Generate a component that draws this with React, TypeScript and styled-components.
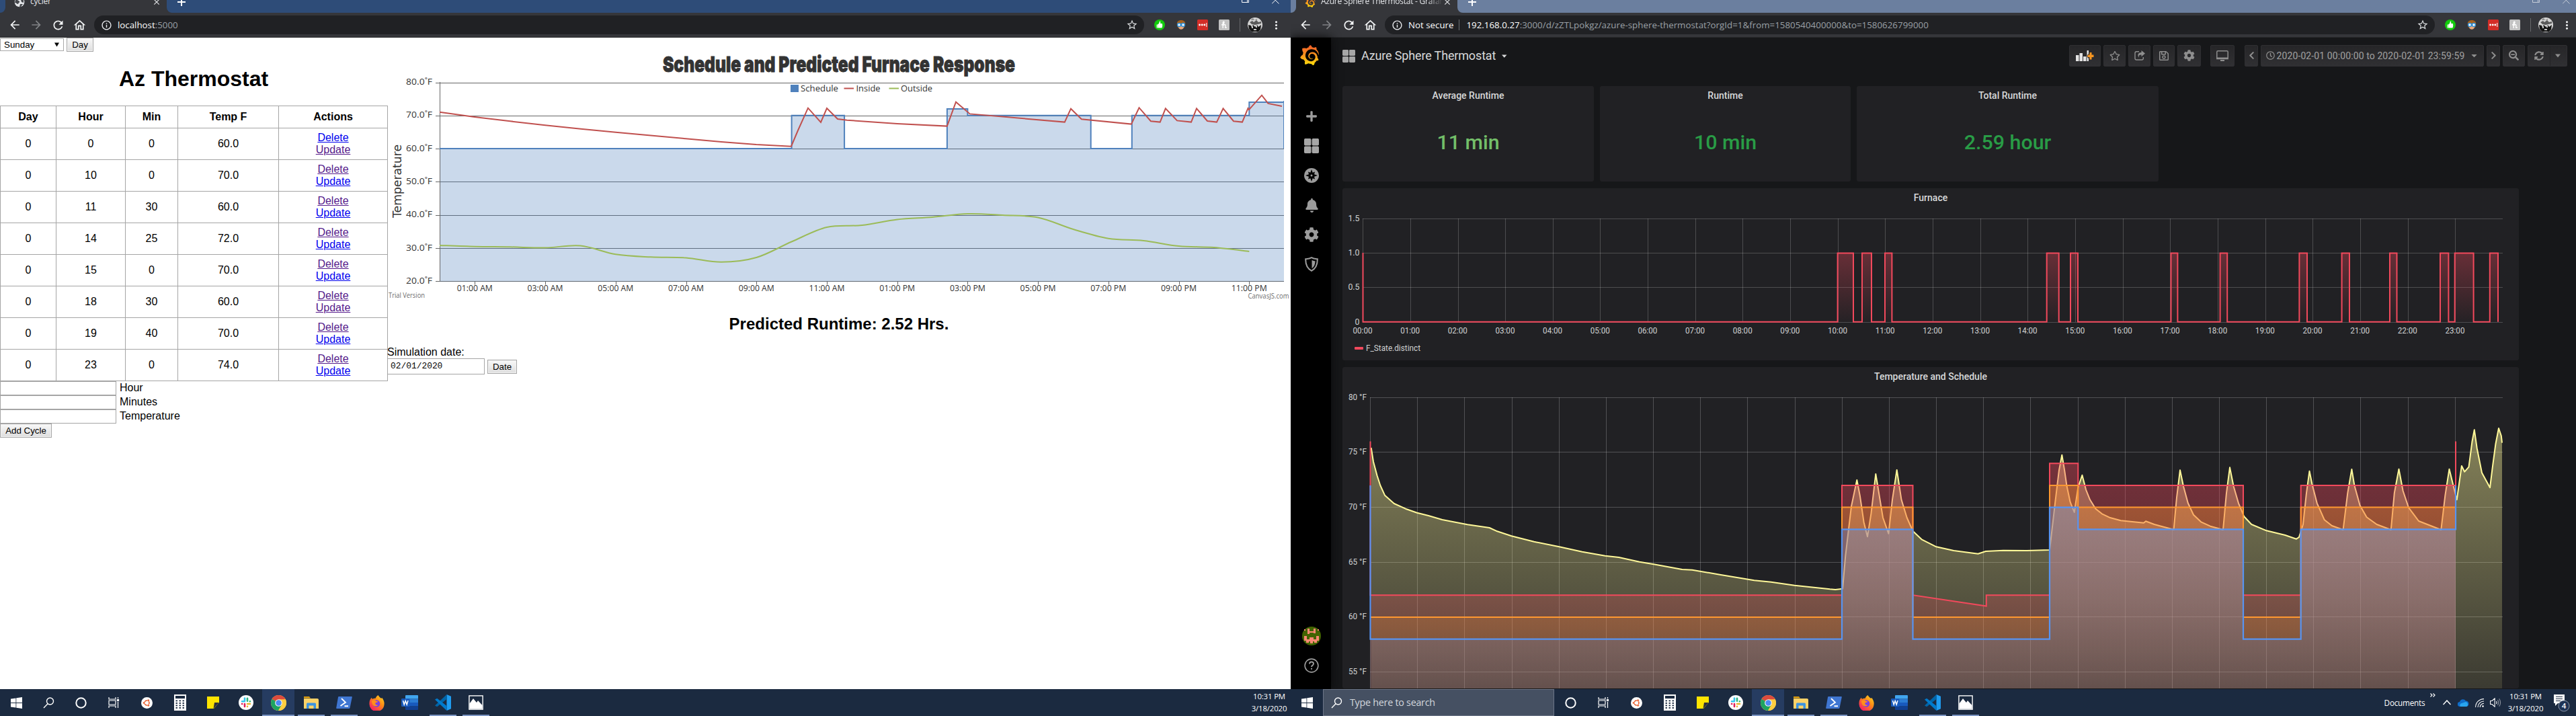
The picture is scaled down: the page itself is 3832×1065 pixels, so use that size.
import React from 'react';
import styled, { createGlobalStyle, css } from 'styled-components';
import {
  FaBell, FaCaretDown, FaChevronLeft, FaChevronRight, FaCog, FaPlus, FaRegClock, FaRegSave,
  FaRegStar, FaSearchMinus, FaSyncAlt,
} from 'react-icons/fa';
import {
  MdArrowBack, MdArrowForward, MdClose, MdInfoOutline, MdMoreVert, MdOutlineHome, MdRefresh, MdStarBorder,
} from 'react-icons/md';
import { SiGrafana } from 'react-icons/si';

const ui = `'Segoe UI', 'Open Sans', 'Noto Sans', sans-serif`;
const arial = `'Liberation Sans', Arial, sans-serif`;
const roboto = `Roboto, 'Noto Sans', sans-serif`;

const GlobalStyle = createGlobalStyle`
  html, body { margin: 0; padding: 0; background: #000; }
  body { width: 3832px; height: 1065px; overflow: hidden; }
  *, *::before, *::after { box-sizing: border-box; }
  svg { display: block; flex: none; }
`;

const Desktop = styled.div`
  display: flex;
  width: 3832px;
  height: 1065px;
  overflow: hidden;
`;

const Monitor = styled.section<{ $width: number }>`
  display: flex;
  flex-direction: column;
  width: ${(p) => p.$width}px;
  height: 1065px;
  overflow: hidden;
  flex: none;
`;

/* ---------- browser chrome ---------- */

const TabStrip = styled.div<{ $color: string }>`
  display: flex;
  width: 1920px;
  height: 19px;
  background: ${(p) => p.$color};
  overflow: hidden;
  flex: none;
`;

const TabEdge = styled.div<{ $side: 'left' | 'right'; $color: string }>`
  width: 8px;
  background: #35363a;
  flex: none;
  &::before {
    content: '';
    display: block;
    height: 19px;
    background: ${(p) => p.$color};
    border-radius: ${(p) => (p.$side === 'left' ? '0 0 8px 0' : '0 0 0 8px')};
  }
`;

const Tab = styled.div`
  display: flex;
  align-items: center;
  width: 240px;
  height: 19px;
  padding: 0 8px 0 13px;
  background: #35363a;
  color: #e3e5e8;
  font: 12px/18px ${ui};
  flex: none;
`;

const TabIcon = styled.div`
  display: flex;
  margin: -13px 8px 0 0;
`;

const TabTitle = styled.div<{ $fade?: boolean }>`
  flex: 1;
  margin-top: -15px;
  overflow: hidden;
  white-space: nowrap;
  letter-spacing: -0.25px;
  ${(p) => p.$fade && css`
    mask-image: linear-gradient(90deg, #000 88%, transparent);
  `}
`;

const TabClose = styled.div`
  margin-top: -13px;
`;

const NewTab = styled.div`
  margin: -6px 0 0 5px;
`;

const WindowButtons = styled.div`
  display: flex;
  gap: 34px;
  margin: -5px 17px 0 auto;
`;

const Toolbar = styled.div`
  display: flex;
  align-items: center;
  width: 1920px;
  height: 37px;
  padding-left: 6px;
  background: #35363a;
  border-bottom: 1px solid #28292b;
  flex: none;
`;

const NavButton = styled.div<{ $dim?: boolean }>`
  display: flex;
  justify-content: center;
  width: 32px;
  color: ${(p) => (p.$dim ? '#818386' : '#f1f3f4')};
`;

const Omnibox = styled.div`
  display: flex;
  align-items: center;
  width: 1562px;
  height: 28px;
  margin: 0 7px 0 6px;
  padding: 0 9px 0 10px;
  border-radius: 14px;
  background: #202124;
  color: #9aa0a6;
  font: 13.3px/28px ${ui};
  white-space: nowrap;
`;

const Host = styled.span`
  color: #fff;
`;

const UrlText = styled.div<{ $spacing: number }>`
  margin-left: 8px;
  letter-spacing: ${(p) => p.$spacing}px;
`;

const UrlDivider = styled.div`
  width: 1px;
  height: 16px;
  margin: 0 2px 0 8px;
  background: #6b6d70;
`;

const StarSlot = styled.div`
  margin-left: auto;
  color: #dcdee0;
`;

const Extension = styled.div<{ $width?: number }>`
  display: flex;
  justify-content: center;
  width: ${(p) => p.$width ?? 32}px;
  color: #f1f3f4;
`;

const Globe = () => (
  <svg width="16" height="16" viewBox="0 0 16 16">
    <circle cx="8" cy="8" r="7.3" fill="#e3e5e8" />
    <path d="M2 5c3-1 4 1 6 2 1 2-2 2-2 4-2 0-3-2-5-2zM9 1l2 3 3 1v4l-3-1-1-3-2-1zM9 11h4l-3 4H8z" fill="#45474b" />
  </svg>
);

const GrafanaLogo = ({ size }: { size: number }) => (
  <>
    <svg width="0" height="0">
      <defs>
        <linearGradient id="flame" x1="0" x2="0" y1="1" y2="0">
          <stop offset="0" stopColor="#fcde0b" />
          <stop offset="0.45" stopColor="#f99b1c" />
          <stop offset="1" stopColor="#f05a28" />
        </linearGradient>
      </defs>
    </svg>
    <SiGrafana size={size} fill="url(#flame)" />
  </>
);

const Extensions = () => (
  <>
    <Extension>
      <svg width="16" height="16" viewBox="0 0 16 16">
        <circle cx="8" cy="8" r="8" fill="#12ca0c" />
        <path d="M8 2.500c1.300 0 1.300 1 1.200 3.500h2.300c1 0 1 5.500-.2 6.500H5.200V7.200L7 6z" fill="#fff" />
        <rect x="3.600" y="7.500" width="1.200" height="5" fill="#fff" />
      </svg>
    </Extension>
    <Extension>
      <svg width="16" height="16" viewBox="0 0 16 16">
        <path d="M2 8C1 3 4 1 8 1s7 2 6 7l-1 4H3z" fill="#a5611f" />
        <path d="M4 6h8v5c0 5-8 5-8 0z" fill="#e8a678" />
        <circle cx="5" cy="8" r="2.400" fill="#fff" stroke="#2f8fd6" strokeWidth="1.500" />
        <circle cx="11" cy="8" r="2.400" fill="#fff" stroke="#2f8fd6" strokeWidth="1.500" />
      </svg>
    </Extension>
    <Extension>
      <svg width="16" height="16" viewBox="0 0 16 16">
        <rect width="16" height="16" rx="1.500" fill="#d32d27" />
        <circle cx="3.600" cy="8" r="1.400" fill="#fff" />
        <circle cx="7.200" cy="8" r="1.400" fill="#fff" />
        <circle cx="10.800" cy="8" r="1.400" fill="#fff" />
        <rect x="13.300" y="5" width="1" height="6" fill="#fff" />
      </svg>
    </Extension>
    <Extension>
      <svg width="16" height="16" viewBox="0 0 16 16">
        <rect width="16" height="16" rx="1.500" fill="#c3c3c3" />
        <path d="M4 8c2.500 0 4-2 4-4 0-1.500-1.800-1-1.800 1v8M6.300 9c3.500-3 4.200-1 3.400 1.500-.5 2 .7 2.500 2 1" fill="none" stroke="#fff" strokeWidth="1.400" />
      </svg>
    </Extension>
    <Extension $width={15}>
      <svg width="1" height="20"><rect width="1" height="20" fill="#68696c" /></svg>
    </Extension>
    <Extension $width={29}>
      <svg width="22" height="22" viewBox="0 0 22 22">
        <clipPath id="face"><circle cx="11" cy="11" r="11" /></clipPath>
        <g clipPath="url(#face)">
          <rect width="22" height="22" fill="#d4d4d4" />
          <path d="M3 7l4-2 2 2 4-3 3 3 4-1v3l-5 1-4 1-5-1z" fill="#5a5a5a" />
          <path d="M1 11l4 1 1 3 2-4 3 3 3-3 2 3 4-3-1 7-3 3H5l-3-4z" fill="#151515" />
          <path d="M6 13h2v3H6zM12 12h2v3h-2zM9 17h4v2H9z" fill="#c9c9c9" />
          <path d="M5 3l3-2 2 3 4-2v2H5z" fill="#8c8c8c" />
        </g>
      </svg>
    </Extension>
    <Extension $width={35}><MdMoreVert size={19} /></Extension>
  </>
);

type BrowserProps = {
  stripColor: string;
  favicon: React.ReactNode;
  title: string;
  fade?: boolean;
  dimButtons?: boolean;
  address: React.ReactNode;
};

const BrowserChrome = ({ stripColor, favicon, title, fade, dimButtons, address }: BrowserProps) => (
  <>
    <TabStrip $color={stripColor}>
      <TabEdge $side="left" $color={stripColor} />
      <Tab>
        <TabIcon>{favicon}</TabIcon>
        <TabTitle $fade={fade}>{title}</TabTitle>
        <TabClose><MdClose size={14} /></TabClose>
      </Tab>
      <TabEdge $side="right" $color={stripColor} />
      <NewTab>
        <svg width="16" height="16" viewBox="0 0 16 16"><path d="M9 3v12M3 9h12" stroke="#fff" strokeWidth="2" /></svg>
      </NewTab>
      <WindowButtons>
        <svg width="11" height="12" viewBox="0 0 11 12" fill="none" stroke={dimButtons ? '#c5ccd8' : '#fff'}>
          <path d="M2.500 2.500V.5h8v8h-2M.5 2.500h8v6h-8z" />
        </svg>
        <svg width="11" height="12" viewBox="0 0 11 12" fill="none" stroke={dimButtons ? '#c5ccd8' : '#fff'}>
          <path d="M0 0l10.500 10.500M10.500 0L0 10.500" />
        </svg>
      </WindowButtons>
    </TabStrip>
    <Toolbar>
      <NavButton><MdArrowBack size={20} /></NavButton>
      <NavButton $dim><MdArrowForward size={20} /></NavButton>
      <NavButton><MdRefresh size={21} /></NavButton>
      <NavButton><MdOutlineHome size={21} /></NavButton>
      <Omnibox>
        <MdInfoOutline size={17} color="#e8eaed" />
        {address}
        <StarSlot><MdStarBorder size={18} /></StarSlot>
      </Omnibox>
      <Extensions />
    </Toolbar>
  </>
);

/* ---------- scheduler page ---------- */

const SchedulerPage = styled.main`
  display: flex;
  flex: 1;
  background: #fff;
  color: #000;
  font: 16px/18px ${arial};
`;

const CycleColumn = styled.div`
  width: 576px;
  flex: none;
`;

const DayPicker = styled.form`
  display: flex;
  align-items: center;
  gap: 4px;
  height: 21px;
`;

const SelectBox = styled.div`
  display: flex;
  align-items: center;
  justify-content: space-between;
  width: 95px;
  height: 19px;
  padding: 0 6px 0 5px;
  border: 1px solid #a9a9a9;
  font-size: 13.33px;
`;

const PushButton = styled.button<{ $width: number }>`
  width: ${(p) => p.$width}px;
  height: 21px;
  padding: 0;
  border: 1px solid #a6a6a6;
  border-radius: 0;
  background: linear-gradient(#f8f8f8, #dedede);
  box-shadow: inset 0 0 0 1px #f2f2f2;
  color: #000;
  font: 13.33px/15px ${arial};
`;

const PageHeading = styled.h1`
  margin: 21px 0 21px;
  font-size: 32px;
  line-height: 38px;
  text-align: center;
`;

const CycleTable = styled.table`
  width: 576px;
  table-layout: fixed;
  border-collapse: collapse;
  text-align: center;
`;

const HeadCell = styled.th<{ $width: number }>`
  width: ${(p) => p.$width}px;
  height: 33px;
  padding: 0;
  border: 1px solid #a5a5a5;
`;

const Cell = styled.td`
  height: 47px;
  padding: 0;
  border: 1px solid #a5a5a5;
`;

const Action = styled.a<{ $visited?: boolean }>`
  display: block;
  color: ${(p) => (p.$visited ? '#551a8b' : '#0000ee')};
  text-decoration: underline;
`;

const FieldRow = styled.label`
  display: flex;
  align-items: center;
  gap: 5px;
  height: 21px;
`;

const FieldName = styled.span`
  padding-bottom: 2px;
`;

const TextField = styled.div<{ $width: number; $height: number }>`
  width: ${(p) => p.$width}px;
  height: ${(p) => p.$height}px;
  padding: 0 4px;
  border: 1px solid #a5a5a5;
  background: #fff;
  font: 12.9px/22px 'Liberation Mono', monospace;
`;

const ForecastColumn = styled.div`
  width: 1344px;
`;

const Forecast = styled.h2`
  margin: 13px 0 19px;
  font-size: 24px;
  line-height: 28px;
  text-align: center;
`;

const DateRow = styled.div`
  display: flex;
  align-items: center;
  gap: 4px;
  height: 24px;
`;

const DateLabel = styled.div`
  height: 18px;
`;

type Cycle = { hour: number; min: number; temp: string; deleteVisited: boolean; updateVisited: boolean };

const cycles: Cycle[] = [
  { hour: 0, min: 0, temp: '60.0', deleteVisited: false, updateVisited: true },
  { hour: 10, min: 0, temp: '70.0', deleteVisited: true, updateVisited: false },
  { hour: 11, min: 30, temp: '60.0', deleteVisited: true, updateVisited: false },
  { hour: 14, min: 25, temp: '72.0', deleteVisited: true, updateVisited: false },
  { hour: 15, min: 0, temp: '70.0', deleteVisited: true, updateVisited: false },
  { hour: 18, min: 30, temp: '60.0', deleteVisited: true, updateVisited: true },
  { hour: 19, min: 40, temp: '70.0', deleteVisited: true, updateVisited: false },
  { hour: 23, min: 0, temp: '74.0', deleteVisited: true, updateVisited: false },
];

type Point = [number, number];

const polyline = (pts: Point[]) => pts.map(([x, y], i) => `${i ? 'L' : 'M'}${x.toFixed(1)} ${y.toFixed(1)}`).join('');

/* Catmull-Rom spline through the points. */
const spline = (pts: Point[]) =>
  pts.reduce((d, p, i) => {
    if (i === 0) return `M${p[0]} ${p[1]}`;
    const a = pts[Math.max(0, i - 2)];
    const b = pts[i - 1];
    const c = pts[Math.min(pts.length - 1, i + 1)];
    return `${d}C${b[0] + (p[0] - a[0]) / 6} ${b[1] + (p[1] - a[1]) / 6} ${p[0] - (c[0] - b[0]) / 6} ${p[1] - (c[1] - b[1]) / 6} ${p[0]} ${p[1]}`;
  }, '');

const scheduleX = (h: number) => Math.min(1910, 654 + h * 52.36);
const scheduleY = (t: number) => 122.5 + (80 - t) * 4.93;

const scheduleSteps: [number, number][] = [
  [0, 60], [10, 70], [11.5, 60], [14.417, 72], [15, 70], [18.5, 60], [19.667, 70], [23, 74], [24, 74],
];

const stepPoints = (steps: [number, number][], x: (h: number) => number, y: (t: number) => number): Point[] => {
  const out: Point[] = [];
  steps.forEach(([h, t], i) => {
    if (i) out.push([x(h), y(steps[i - 1][1])]);
    out.push([x(h), y(t)]);
  });
  return out;
};

const insideLine: Point[] = [
  [654, 166.7], [706, 174], [759, 180.3], [811, 186.3], [864, 191.7], [916, 196.7], [968, 201.5], [1020, 206.3],
  [1073, 211], [1125, 215], [1177, 217.7], [1187, 194], [1202, 160.7], [1221, 182], [1230, 161], [1246, 177],
  [1260, 178.7], [1334.6, 183.9], [1408.8, 187.6], [1422, 151.7], [1442.7, 169.4], [1583.8, 181.6], [1593, 161.7],
  [1608.8, 177.2], [1682.9, 184.6], [1694.5, 160.2], [1711.9, 180.2], [1725.7, 181.6], [1733.8, 161.3], [1751, 179.4],
  [1772, 181.6], [1780, 161.3], [1796, 180], [1810, 181.6], [1819.5, 161.3], [1835, 180.2], [1848, 181.6],
  [1856.5, 161], [1858, 163.2], [1877, 141.7], [1886.4, 153.9], [1907, 158],
];

const outsideY = [
  365, 366.7, 367.3, 368.5, 365.6, 378.3, 382.3, 383.5, 389.8, 383, 359.5, 338, 335, 326.5, 323, 318, 320, 323.5, 341,
  354.7, 358, 366, 368, 374,
];

const calibri = `'Open Sans', 'Noto Sans', sans-serif`;

const ResponseChart = () => {
  const schedule = stepPoints(scheduleSteps, scheduleX, scheduleY);
  return (
    <svg width="1344" height="399" viewBox="576 56 1344 399" fontFamily={calibri} fill="#333">
      <text x="986" y="106.500" fontFamily="Impact, Inter, sans-serif" fontWeight="900" fontSize="32" textLength="524"
        lengthAdjust="spacingAndGlyphs" stroke="#333" strokeWidth="0.900">
        Schedule and Predicted Furnace Response
      </text>
      <text transform="translate(597 324) rotate(-90)" fontFamily="'DejaVu Sans', sans-serif" fontSize="17.500"
        textLength="109" lengthAdjust="spacingAndGlyphs">
        Temperature
      </text>
      {[80, 70, 60, 50, 40, 30, 20].map((t) => (
        <g key={t}>
          <path d={`M648 ${Math.round(scheduleY(t)) + 0.5}H1910`} stroke="#666" />
          <text x="604" y={scheduleY(t) + 3.500} fontSize="12.200" textLength="39" lengthAdjust="spacingAndGlyphs">
            {`${t}.0˚F`}
          </text>
        </g>
      ))}
      <path d={`${polyline(schedule)}V418.500H654Z`} fill="#4f81bc" fillOpacity="0.300" />
      <path d="M654.500 122V418" stroke="#666" />
      <path d={polyline(schedule)} fill="none" stroke="#4f81bc" strokeWidth="2" />
      <path d="M1909.500 150V221" stroke="#4f81bc" />
      <path d={polyline(insideLine)} fill="none" stroke="#c0504e" strokeWidth="2" />
      <path d={spline(outsideY.map((y, h) => [654 + h * 52.36, y] as Point))} fill="none" stroke="#9bbb58" strokeWidth="2" />
      {Array.from({ length: 12 }, (_, i) => i * 2 + 1).map((h) => {
        const x = 654 + h * 52.36;
        const label = `${String(h % 12 || 12).padStart(2, '0')}:00 ${h < 12 ? 'AM' : 'PM'}`;
        return (
          <g key={h}>
            <path d={`M${Math.round(x) + 0.5} 419v4.500`} stroke="#666" />
            <text x={x - 26.500} y="433" fontSize="12.200" textLength="53" lengthAdjust="spacingAndGlyphs">{label}</text>
          </g>
        );
      })}
      <rect x="1176" y="126" width="12" height="11" fill="#4f81bc" />
      <path d="M1255.500 131.500h14.500" stroke="#c0504e" strokeWidth="2" />
      <path d="M1322.500 131.500h14.500" stroke="#9bbb58" strokeWidth="2" />
      <g fontSize="12.500">
        <text x="1191" y="136" textLength="56" lengthAdjust="spacingAndGlyphs">Schedule</text>
        <text x="1273.500" y="136" textLength="36" lengthAdjust="spacingAndGlyphs">Inside</text>
        <text x="1340" y="136" textLength="47" lengthAdjust="spacingAndGlyphs">Outside</text>
      </g>
      <g fontSize="10.500" fill="#6c6c6c">
        <text x="578" y="442.500" textLength="54" lengthAdjust="spacingAndGlyphs">Trial Version</text>
        <text x="1856.500" y="443.500" textLength="61" lengthAdjust="spacingAndGlyphs">CanvasJS.com</text>
      </g>
    </svg>
  );
};

const Scheduler = () => (
  <SchedulerPage>
    <CycleColumn>
      <DayPicker>
        <SelectBox>
          Sunday
          <svg width="7" height="7" viewBox="0 0 7 7"><path d="M0 .5h7L3.500 6.500z" /></svg>
        </SelectBox>
        <PushButton $width={40} type="button">Day</PushButton>
      </DayPicker>
      <PageHeading>Az Thermostat</PageHeading>
      <CycleTable>
        <thead>
          <tr>
            <HeadCell $width={83}>Day</HeadCell>
            <HeadCell $width={103}>Hour</HeadCell>
            <HeadCell $width={78}>Min</HeadCell>
            <HeadCell $width={150}>Temp F</HeadCell>
            <HeadCell $width={162}>Actions</HeadCell>
          </tr>
        </thead>
        <tbody>
          {cycles.map((c) => (
            <tr key={c.hour}>
              <Cell>0</Cell>
              <Cell>{c.hour}</Cell>
              <Cell>{c.min}</Cell>
              <Cell>{c.temp}</Cell>
              <Cell>
                <Action $visited={c.deleteVisited}>Delete</Action>
                <Action $visited={c.updateVisited}>Update</Action>
              </Cell>
            </tr>
          ))}
        </tbody>
      </CycleTable>
      {['Hour', 'Minutes', 'Temperature'].map((label) => (
        <FieldRow key={label}>
          <TextField $width={173} $height={21} />
          <FieldName>{label}</FieldName>
        </FieldRow>
      ))}
      <PushButton $width={77} type="button">Add Cycle</PushButton>
    </CycleColumn>
    <ForecastColumn>
      <ResponseChart />
      <Forecast>Predicted Runtime: 2.52 Hrs.</Forecast>
      <DateLabel>Simulation date:</DateLabel>
      <DateRow>
        <TextField $width={145} $height={24}>02/01/2020</TextField>
        <PushButton $width={44} type="button">Date</PushButton>
      </DateRow>
    </ForecastColumn>
  </SchedulerPage>
);

/* ---------- dashboard page ---------- */

const DashboardPage = styled.main`
  display: flex;
  flex: 1;
  min-height: 0;
  background: #161719;
  color: #d8d9da;
  font: 14px/20px ${roboto};
`;

const SideBar = styled.nav`
  display: flex;
  flex-direction: column;
  width: 60px;
  padding-bottom: 13px;
  background: #000;
  box-shadow: 0 0 14px #0a0a0b;
  color: #9c9c9c;
  flex: none;
`;

const SideLogo = styled.div`
  height: 95px;
  padding: 11px 0 0 13px;
`;

const SideItem = styled.div<{ $push?: boolean }>`
  display: flex;
  align-items: center;
  justify-content: center;
  height: 44px;
  padding-left: 2px;
  ${(p) => p.$push && css`margin-top: auto;`}
`;

const Board = styled.div`
  display: flex;
  flex-direction: column;
  flex: 1;
  min-width: 0;
  padding-left: 17px;
`;

const BoardHeader = styled.header`
  display: flex;
  align-items: center;
  height: 72px;
  padding-bottom: 18px;
`;

const BoardTitle = styled.div`
  display: flex;
  align-items: center;
  gap: 9px;
  width: 1081px;
  font-size: 18px;
  letter-spacing: -0.15px;
`;

const ToolGroup = styled.div<{ $left: number }>`
  display: flex;
  gap: 4px;
  margin: -1px 0 0 ${(p) => p.$left}px;
`;

const ToolButton = styled.div<{ $width: number }>`
  display: flex;
  align-items: center;
  justify-content: center;
  gap: 3px;
  width: ${(p) => p.$width}px;
  height: 32px;
  border: 1px solid #2f2f32;
  border-radius: 2px;
  background: linear-gradient(#262628, #303033);
  color: #8e8e8e;
  font-size: 14px;
  letter-spacing: 0.1px;
  white-space: nowrap;
`;

const TimeText = styled.span`
  margin-right: 5px;
  color: #a0a0a0;
`;

const StatRow = styled.div`
  display: flex;
  gap: 9px;
`;

const Panel = styled.section<{ $width: number; $height: number }>`
  width: ${(p) => p.$width}px;
  height: ${(p) => p.$height}px;
  border-radius: 3px;
  background: #212124;
  flex: none;
`;

const PanelTitle = styled.h3`
  margin: 0;
  padding-top: 4px;
  font: 500 14px/20px ${roboto};
  text-align: center;
`;

const StatValue = styled.div<{ $color: string }>`
  padding-top: 41px;
  color: ${(p) => p.$color};
  font: 500 30.4px/38px ${roboto};
  text-align: center;
`;

const PanelStack = styled.div`
  display: flex;
  flex-direction: column;
  gap: 10px;
  margin-top: 10px;
`;

const furnacePulses: [number, number][] = [
  [2733.6, 2757], [2770, 2784], [2804, 2814.4], [3044.7, 3062.7], [3080, 3091], [3229.5, 3239.4], [3302.6, 3313.2],
  [3420.4, 3432], [3483.6, 3495], [3555, 3565.5], [3630, 3642.4], [3651.7, 3679.6], [3703.8, 3716],
];

const FurnaceChart = () => {
  const top = 376.5;
  const zero = 478.7;
  const pulses = furnacePulses.map(([a, b]) => `H${a}V${top}H${b}V${zero}`).join('');
  return (
    <svg width="1750" height="232" viewBox="1997 304 1750 232" fontFamily={roboto} fontSize="12.300" fill="#d0d1d2">
      <defs>
        <linearGradient id="heat" x1="0" x2="0" y1="325" y2="479" gradientUnits="userSpaceOnUse">
          <stop offset="0" stopColor="#f2495c" stopOpacity="0.500" />
          <stop offset="1" stopColor="#f2495c" stopOpacity="0.020" />
        </linearGradient>
      </defs>
      <g stroke="#fff" strokeOpacity="0.200" fill="none">
        {Array.from({ length: 24 }, (_, h) => (
          <path key={h} d={`M${Math.floor(2027.7 + h * 70.65) + 0.5} 325V479`} />
        ))}
        {[325.5, 376.5, 427.5, 479.5].map((y) => <path key={y} d={`M2027 ${y}H3723`} />)}
      </g>
      <path d={`M2027.500 ${zero}${pulses}Z`} fill="url(#heat)" />
      <path d={`M2027.500 376V${zero}${pulses}`} fill="none" stroke="#f2495c" strokeWidth="2" />
      {([['1.5', 324.5], ['1.0', 375.5], ['0.5', 426.500], ['0', 478.500]] as [string, number][]).map(([t, y]) => (
        <text key={t} x="2022.500" y={y + 4.500} textAnchor="end">{t}</text>
      ))}
      {Array.from({ length: 24 }, (_, h) => (
        <text key={h} x={2027 + h * 70.65} y="496" textAnchor="middle" textLength="29" lengthAdjust="spacingAndGlyphs">
          {`${String(h).padStart(2, '0')}:00`}
        </text>
      ))}
      <rect x="2015" y="516" width="13" height="4" rx="1" fill="#f2495c" />
      <text x="2032" y="522" textLength="81" lengthAdjust="spacingAndGlyphs">F_State.distinct</text>
    </svg>
  );
};

const degY = (t: number) => 591.3 + (80 - t) * 16.33;

const room: Point[] = [
  [2039.7, 666], [2043, 686.7], [2048.5, 707.3], [2053.3, 722], [2060, 736.7], [2073.8, 749], [2090.8, 756.7],
  [2107.9, 762.7], [2125, 767], [2145.4, 773], [2183, 780.3], [2215.7, 785], [2227.3, 790.3], [2248.5, 797.3],
  [2282, 805.7], [2319.5, 813.3], [2353.6, 820.7], [2387.7, 826.7], [2408.2, 829], [2438.9, 835.7], [2460, 839.3],
  [2502.3, 847], [2517.3, 847.7], [2558.3, 854.7], [2609.5, 863.3], [2634.7, 865.7], [2669.5, 870.7], [2722, 876.3],
  [2730.3, 877], [2741, 875.7], [2745.3, 826.7], [2754, 753.3], [2762.3, 714], [2767, 738.3], [2772.6, 776.7],
  [2778, 798.3], [2783.5, 763.3], [2790.3, 705], [2795, 733.3], [2801, 770], [2809.4, 793.7], [2815, 743.3],
  [2821.7, 699], [2828.5, 743.3], [2836.7, 770], [2845.6, 790], [2858.6, 802.3], [2880.4, 813.3], [2906.3, 819],
  [2942.5, 823.7], [2954, 820], [2980, 818.7], [3015, 819], [3049, 818], [3057.3, 746.7], [3062.9, 700],
  [3067.3, 676.7], [3071.2, 700], [3074.6, 723.3], [3079.6, 746.7], [3085.7, 762], [3091.3, 725], [3097.4, 706.7],
  [3103, 728.3], [3109, 743.3], [3117.4, 756.7], [3126.9, 764.3], [3138, 769.7], [3154.7, 774.3], [3189, 777.7],
  [3192, 775.3], [3204.7, 780], [3218.6, 783.7], [3233.6, 787.7], [3238, 740], [3243, 699.3], [3248, 723.3],
  [3254.8, 748.3], [3263, 765.7], [3274.2, 776.3], [3288, 782.7], [3307, 788], [3312, 733.3], [3317, 695.3],
  [3322.6, 723.3], [3329.9, 748.3], [3338.2, 768.3], [3349.3, 780], [3371.6, 789.3], [3399.4, 796], [3416, 801.7],
  [3420, 799], [3426, 780], [3431, 733.3], [3435.5, 700.7], [3439.4, 720], [3446.7, 748.3], [3457.8, 773.3],
  [3468.9, 782], [3485.6, 788], [3492.3, 733.3], [3498.4, 698], [3502.3, 721.7], [3510.6, 751.7], [3520.6, 769.3],
  [3535.6, 780], [3556.8, 788], [3561.8, 733.3], [3568.5, 697.7], [3574.6, 730], [3583, 755], [3598, 775],
  [3631.3, 788], [3637.4, 736.7], [3643.5, 697.7], [3649.7, 723.3], [3654.7, 743.3], [3661.9, 693], [3666.3, 701.7],
  [3672.5, 694.7], [3677.5, 656.7], [3680.8, 639.3], [3684.7, 666.7], [3692, 703.3], [3704, 725.3], [3708, 693.3],
  [3712.5, 660], [3717, 637], [3720.8, 648.3], [3722, 658.7],
];

/* Setpoint band: centre temperature per segment; the limits sit two degrees above and below. */
const band = (offset: number): Point[] =>
  stepPoints(
    [[2038.5, 60], [2740, 70], [2845.5, 60], [3049, 72], [3091.3, 70], [3337, 60], [3422.7, 70], [3653, 70]],
    (x) => x,
    (t) => degY(t + offset),
  );

const upperBand = (): Point[] => {
  const pts = band(2);
  const dip = pts.findIndex(([x, y]) => x === 2845.5 && y === degY(62));
  pts.splice(dip + 1, 0, [2954.8, degY(61)], [2954.8, degY(62)]);
  return [[2038.5, degY(76)], ...pts, [3653, degY(76)]];
};

const TemperatureChart = () => {
  const floor = 1024;
  const series: { color: string; pts: Point[]; width: number }[] = [
    { color: '#fff899', pts: room, width: 2 },
    { color: '#f2495c', pts: upperBand(), width: 2 },
    { color: '#ff9830', pts: band(0), width: 2 },
    { color: '#5794f2', pts: [[2038.5, degY(72)], ...band(-2), [3653, degY(72)]], width: 2.2 },
  ];
  return (
    <svg width="1750" height="454" viewBox="1997 570 1750 454" fontFamily={roboto} fontSize="12.300" fill="#d0d1d2">
      <defs>
        {series.map((s, i) => (
          <linearGradient key={s.color} id={`fill${i}`} x1="0" x2="0" y1="591" y2="1024" gradientUnits="userSpaceOnUse">
            <stop offset="0" stopColor={s.color} stopOpacity="0.490" />
            <stop offset="1" stopColor={s.color} stopOpacity="0.120" />
          </linearGradient>
        ))}
      </defs>
      <g stroke="#fff" strokeOpacity="0.220" fill="none">
        {Array.from({ length: 24 }, (_, h) => (
          <path key={h} d={`M${Math.floor(2038.6 + h * 70.16) + 0.5} 591V1024`} />
        ))}
        {[80, 75, 70, 65, 60, 55].map((t) => <path key={t} d={`M2038 ${Math.floor(degY(t)) + 0.5}H3723`} />)}
      </g>
      {series.map((s, i) => (
        <g key={s.color}>
          <path d={`${polyline(s.pts)}V${floor}H${s.pts[0][0]}Z`} fill={`url(#fill${i})`} />
          <path d={polyline(s.pts)} fill="none" stroke={s.color} strokeWidth={s.width} strokeLinejoin={i ? 'miter' : 'round'} />
        </g>
      ))}
      {[80, 75, 70, 65, 60, 55].map((t) => (
        <text key={t} x="2006" y={degY(t) + 3.500} textLength="27" lengthAdjust="spacingAndGlyphs">{`${t} °F`}</text>
      ))}
    </svg>
  );
};

const GridIcon = ({ size }: { size: number }) => (
  <svg width={size} height={size} viewBox="0 0 20 20" fill="#a6a6a6">
    <rect width="9.500" height="9.500" rx="1.500" />
    <rect x="10.500" width="9.500" height="9.500" rx="1.500" />
    <rect y="10.500" width="9.500" height="9.500" rx="1.500" />
    <rect x="10.500" y="10.500" width="9.500" height="9.500" rx="1.500" />
  </svg>
);

const Dashboard = () => (
  <DashboardPage>
    <SideBar>
      <SideLogo><GrafanaLogo size={30} /></SideLogo>
      <SideItem><FaPlus size={18} /></SideItem>
      <SideItem><GridIcon size={22} /></SideItem>
      <SideItem>
        <svg width="22" height="22" viewBox="0 0 22 22">
          <circle cx="11" cy="11" r="11" fill="#9c9c9c" />
          <path d="M11 2l1.700 4.800L16 5.500l-1 3.700L20 11l-5 1.800 1 3.700-3.300-1.300L11 20l-1.700-4.800L6 16.500l1-3.700L2 11l5-1.800-1-3.700 3.300 1.300z" fill="#000" />
          <circle cx="11" cy="11" r="1.500" fill="#9c9c9c" />
        </svg>
      </SideItem>
      <SideItem><FaBell size={21} /></SideItem>
      <SideItem><FaCog size={22} /></SideItem>
      <SideItem>
        <svg width="20" height="22" viewBox="0 0 20 22">
          <path d="M10 1.200C7 3 4 3 1.200 3.200 1 11 3.500 17.500 10 20.800 16.500 17.500 19 11 18.800 3.200 16 3 13 3 10 1.200z" fill="none" stroke="#9c9c9c" strokeWidth="2" />
          <path d="M10.500 5c2 1 3.500 1.200 5 1.200-.2 5-1.500 8.500-5 11z" fill="#9c9c9c" />
        </svg>
      </SideItem>
      <SideItem $push>
        <svg width="28" height="28" viewBox="0 0 28 28">
          <circle cx="14" cy="14" r="14" fill="#426400" />
          <path d="M8 3h3v4h6V3h3v7h-3V9h-6v2H8zM3 4h2v2H3zM23 4h2v2h-2zM3 14h4v5h4v-3h6v3h4v-5h4v7h-3v3h-4v-2h-2v3h-4v-3h-2v2H6v-3H3z" fill="#fb8a74" />
        </svg>
      </SideItem>
      <SideItem>
        <svg width="22" height="22" viewBox="0 0 22 22" fill="none" stroke="#9c9c9c" strokeWidth="1.600">
          <circle cx="11" cy="11" r="9.900" />
          <path d="M8 8.500C8 4.500 14 4.700 14 8.300c0 2.200-3 2.200-3 4.700M11 14.700v2" strokeWidth="1.900" />
        </svg>
      </SideItem>
    </SideBar>
    <Board>
      <BoardHeader>
        <BoardTitle>
          <GridIcon size={19} />
          Azure Sphere Thermostat
          <svg width="8" height="5" viewBox="0 0 8 5" fill="#d8d9da"><path d="M0 .5h7.500L3.750 4.800z" /></svg>
        </BoardTitle>
        <ToolGroup $left={0}>
          <ToolButton $width={47}>
            <svg width="27" height="16" viewBox="0 0 27 16">
              <path d="M0 7h4.500v9H0zM5.500 4H10v12H5.500zM11 9h4.500v7H11zM16.500 0H19v5l-2 2v3l2 2v4h-2.500z" fill="#e3e3e3" />
              <path d="M20.500 3h3v3.500h3v3.500h-3v3.500h-3V10h-3V6.500h3z" fill="#f79520" />
            </svg>
          </ToolButton>
          <ToolButton $width={33}><FaRegStar size={16} /></ToolButton>
          <ToolButton $width={33}>
            <svg width="16" height="15" viewBox="0 0 16 15" fill="none" stroke="#8e8e8e" strokeWidth="1.400">
              <path d="M7 1.700H3.200Q1 1.700 1 3.900v7.900Q1 14 3.200 14h7.900q2.200 0 2.200-2.200V10" />
              <path d="M10.500 0L16 4.600l-5.500 4.600V6.500c-3 0-4.200.8-3.400 4C4.200 8 5 2.900 10.500 2.900z" fill="#8e8e8e" stroke="none" />
            </svg>
          </ToolButton>
          <ToolButton $width={32}><FaRegSave size={16} /></ToolButton>
          <ToolButton $width={35}><FaCog size={17} /></ToolButton>
        </ToolGroup>
        <ToolGroup $left={14}>
          <ToolButton $width={36}>
            <svg width="18" height="16" viewBox="0 0 18 16" fill="none" stroke="#8e8e8e" strokeWidth="1.500">
              <path d="M.8 2.300Q.8.800 2.300.8h13.400q1.500 0 1.500 1.500v10.200H.8z" />
              <path d="M1 11.500h16M6 15h6" strokeWidth="2" />
            </svg>
          </ToolButton>
        </ToolGroup>
        <ToolGroup $left={15}>
          <ToolButton $width={20}><FaChevronLeft size={13} /></ToolButton>
          <ToolButton $width={332}>
            <FaRegClock size={13} />
            <TimeText>2020-02-01 00:00:00 to 2020-02-01 23:59:59</TimeText>
            <FaCaretDown size={13} />
          </ToolButton>
          <ToolButton $width={20}><FaChevronRight size={13} /></ToolButton>
          <ToolButton $width={33}><FaSearchMinus size={15} /></ToolButton>
        </ToolGroup>
        <ToolGroup $left={4}>
          <ToolButton $width={59}>
            <FaSyncAlt size={14} />
            <svg width="22" height="30" viewBox="0 0 22 30">
              <path d="M6.500 0V30" stroke="#242426" />
              <path d="M14 12.500h8l-4 5z" fill="#8e8e8e" />
            </svg>
          </ToolButton>
        </ToolGroup>
      </BoardHeader>
      <StatRow>
        <Panel $width={374} $height={142}>
          <PanelTitle>Average Runtime</PanelTitle>
          <StatValue $color="#73bf69">11 min</StatValue>
        </Panel>
        <Panel $width={373} $height={142}>
          <PanelTitle>Runtime</PanelTitle>
          <StatValue $color="#299c46">10 min</StatValue>
        </Panel>
        <Panel $width={449} $height={142}>
          <PanelTitle>Total Runtime</PanelTitle>
          <StatValue $color="#299c46">2.59 hour</StatValue>
        </Panel>
      </StatRow>
      <PanelStack>
        <Panel $width={1750} $height={256}>
          <PanelTitle>Furnace</PanelTitle>
          <FurnaceChart />
        </Panel>
        <Panel $width={1750} $height={478}>
          <PanelTitle>Temperature and Schedule</PanelTitle>
          <TemperatureChart />
        </Panel>
      </PanelStack>
    </Board>
  </DashboardPage>
);

/* ---------- taskbar ---------- */

const TaskBar = styled.footer`
  display: flex;
  height: 40px;
  background: #1b2a40;
  color: #fff;
  font: 12px/18px ${ui};
  flex: none;
`;

const TaskSlot = styled.div<{ $width: number; $active?: boolean; $running?: boolean }>`
  display: flex;
  align-items: center;
  justify-content: center;
  width: ${(p) => p.$width}px;
  height: 40px;
  flex: none;
  ${(p) => p.$active && css`background: #263c61;`}
  ${(p) => (p.$running || p.$active) && css`
    background-image: linear-gradient(#7c96c4, #7c96c4);
    background-repeat: no-repeat;
    background-position: center bottom;
    background-size: ${p.$active ? '100%' : '40px'} 2px;
  `}
`;

const SearchBox = styled.div`
  display: flex;
  align-items: center;
  gap: 11px;
  width: 344px;
  padding-left: 11px;
  border: 1px solid #6c7688;
  background: #455062;
  color: #d3d7dd;
  font-size: 14.3px;
  letter-spacing: -0.25px;
  flex: none;
`;

const Tray = styled.div<{ $right: number }>`
  display: flex;
  align-items: center;
  margin-left: auto;
  padding-right: ${(p) => p.$right}px;
`;

const Clock = styled.div`
  width: 60px;
  font-size: 11.4px;
  letter-spacing: -0.15px;
  line-height: 18px;
  text-align: center;
`;

const TrayItem = styled.div<{ $width: number; $raise?: number }>`
  display: flex;
  justify-content: center;
  width: ${(p) => p.$width}px;
  padding-bottom: ${(p) => p.$raise ?? 0}px;
  font-size: 11.7px;
  letter-spacing: -0.2px;
`;

const SearchIcon = () => (
  <svg width="17" height="17" viewBox="0 0 17 17" fill="none" stroke="#fff" strokeWidth="1.400">
    <circle cx="10.500" cy="6" r="5" />
    <path d="M7 9.700L1 16" />
  </svg>
);

const WindowsIcon = () => (
  <svg width="17" height="17" viewBox="0 0 17 17" fill="#fff">
    <path d="M0 2.500L7.500 1.400v6.700H0zM8.300 1.300L17 0v8.100H8.300zM0 8.900h7.500v6.700L0 14.500zM8.300 8.900H17V17l-8.700-1.300z" />
  </svg>
);

const TaskViewIcon = () => (
  <svg width="17" height="16" viewBox="0 0 17 16" fill="none" stroke="#fff" strokeWidth="1.200">
    <path d="M1 0v3h10V0M1 16v-3h10v3M1 5h10v6H1zM14.500 0v2M14.500 7v9" />
    <rect x="13.500" y="3.500" width="2" height="2" fill="#fff" />
  </svg>
);

const UbuntuIcon = () => (
  <svg width="17" height="17" viewBox="0 0 17 17">
    <circle cx="8.500" cy="8.500" r="8.500" fill="#fff" />
    <svg x="2.200" y="2.200" width="12.600" height="12.600" viewBox="0 0 20 20" fill="none" stroke="#e95420" strokeWidth="2.400">
      <circle cx="10" cy="10" r="5.500" />
      <g fill="#e95420" stroke="#fff" strokeWidth="1">
        <circle cx="3" cy="10" r="2.600" /><circle cx="13.500" cy="4" r="2.600" /><circle cx="13.500" cy="16" r="2.600" />
      </g>
    </svg>
  </svg>
);

const CalculatorIcon = () => (
  <svg width="18" height="24" viewBox="0 0 18 24">
    <rect width="18" height="24" fill="#fff" />
    <g fill="#1b2a40">
      <rect x="2" y="2" width="14" height="4" />
      {[8.5, 12, 15.5, 19].map((y) => [2.5, 7.5, 12.5].map((x) => <rect key={`${x}-${y}`} x={x} y={y} width="2.500" height="1.800" />))}
    </g>
  </svg>
);

const NotesIcon = () => (
  <svg width="18" height="18" viewBox="0 0 18 18">
    <path d="M0 0h18v9l-8 9H0z" fill="#ffe400" />
    <path d="M18 9h-7l-1.500 9z" fill="#2b2f3c" />
  </svg>
);

const SlackIcon = () => (
  <svg width="22" height="22" viewBox="0 0 22 22">
    <circle cx="11" cy="11" r="11" fill="#fff" />
    <g strokeWidth="2.600" strokeLinecap="round">
      <path d="M9 4.500v4M5 9.300h4" stroke="#36c5f0" />
      <path d="M13 4.800v4M17 9.300h-.2" stroke="#2eb67d" />
      <path d="M13 13h4M13 17v-.2" stroke="#ecb22e" />
      <path d="M9 13v4M5 13h.2" stroke="#e01e5a" />
    </g>
  </svg>
);

const ChromeIcon = () => (
  <svg width="23" height="23" viewBox="0 0 24 24">
    <circle cx="12" cy="12" r="12" fill="#ffcd40" />
    <path d="M12 12L1.600 6A12 12 0 0 1 22.400 6z" fill="#dd4b3e" />
    <path d="M1.600 6A12 12 0 0 0 11.500 24L17 15 12 12z" fill="#1da462" />
    <path d="M12 6.500h10.700A12 12 0 0 1 11.500 24l5.300-9.200z" fill="#ffcd40" />
    <circle cx="12" cy="12" r="5.600" fill="#f1f1f1" />
    <circle cx="12" cy="12" r="4.400" fill="#4c8bf5" />
  </svg>
);

const ExplorerIcon = () => (
  <svg width="22" height="18" viewBox="0 0 22 18">
    <path d="M0 0h8l2 2.500H0z" fill="#e0a110" />
    <path d="M0 3h20q2 0 2 2v13H0z" fill="#fbd268" />
    <path d="M4 11q0-1.500 1.500-1.500h11Q18 9.500 18 11v7h-3.500v-4.500h-7V18H4z" fill="#3c93e0" />
  </svg>
);

const PowerShellIcon = () => (
  <svg width="24" height="18" viewBox="0 0 24 18">
    <path d="M4 0h19q1 0 .8 1L20.500 17q-.3 1-1.300 1H1q-1 0-.8-1L3 1Q3.200 0 4 0z" fill="#3f76d2" />
    <path d="M8 3l6 5.800L6.500 14M12.500 14.200h5.500" fill="none" stroke="#fff" strokeWidth="1.900" />
  </svg>
);

const FirefoxIcon = () => (
  <svg width="23" height="23" viewBox="0 0 24 24">
    <defs>
      <linearGradient id="fox" x1="1" x2="0.200" y1="0" y2="1">
        <stop offset="0" stopColor="#ffe226" /><stop offset="0.450" stopColor="#ff8a16" /><stop offset="1" stopColor="#f5156c" />
      </linearGradient>
    </defs>
    <path d="M14 0c2 3 3 4 5 5 1-.2 1-1 1-1 3 4 4 7 3.500 10.500A11.500 11.500 0 0 1 .5 13C.3 9 2 6 4 4l1 2c2-1 4-1 5-1 1-2 2-4 4-5z" fill="url(#fox)" />
    <circle cx="11.500" cy="13" r="5.500" fill="#7b3fe4" />
    <path d="M4 9c3-2 5-1 7 0l3 1c-1 2-3 1-4 2-1 2 1 4 4 3-2 3-9 4-10-6z" fill="#ff8f1c" />
  </svg>
);

const WordIcon = () => (
  <svg width="25" height="22" viewBox="0 0 25 22">
    <path d="M6 1q0-1 1-1h17q1 0 1 1v4.500H6z" fill="#41a5ee" />
    <path d="M6 5.500h19V11H6z" fill="#2b7cd3" />
    <path d="M6 11h19v5.500H6z" fill="#185abd" />
    <path d="M6 16.500h19V21q0 1-1 1H7q-1 0-1-1z" fill="#103f91" />
    <rect y="5" width="12.500" height="12" rx="1" fill="#185abd" />
    <path d="M2.500 8l1.700 6 2-5.500 2 5.500L10 8" fill="none" stroke="#fff" strokeWidth="1.500" />
  </svg>
);

const CodeIcon = () => (
  <svg width="24" height="24" viewBox="0 0 24 24">
    <path d="M17.500 0L24 2.800v18.400L17.500 24z" fill="#1f9cf0" />
    <path d="M17.500 0v7L3.200 18.300 0 16.500z" fill="#0065a9" />
    <path d="M17.500 24v-7L3.200 5.700 0 7.500z" fill="#007acc" />
  </svg>
);

const PhotosIcon = () => (
  <svg width="22" height="22" viewBox="0 0 22 22">
    <rect x="0.900" y="0.900" width="20.200" height="20.200" fill="#1b2a40" stroke="#fff" strokeWidth="1.400" />
    <path d="M1.500 20.500v-8L7 5l5 6 2-3 6.500 7v5.500z" fill="#fff" />
  </svg>
);

const PinnedApps = () => (
  <>
    <TaskSlot $width={48}>
      <svg width="17" height="17" viewBox="0 0 17 17"><circle cx="8.500" cy="8.500" r="7.200" fill="none" stroke="#fff" strokeWidth="2" /></svg>
    </TaskSlot>
    <TaskSlot $width={50}><TaskViewIcon /></TaskSlot>
    <TaskSlot $width={49}><UbuntuIcon /></TaskSlot>
    <TaskSlot $width={49}><CalculatorIcon /></TaskSlot>
    <TaskSlot $width={49}><NotesIcon /></TaskSlot>
    <TaskSlot $width={49}><SlackIcon /></TaskSlot>
    <TaskSlot $width={48} $active><ChromeIcon /></TaskSlot>
    <TaskSlot $width={49} $running><ExplorerIcon /></TaskSlot>
    <TaskSlot $width={49} $running><PowerShellIcon /></TaskSlot>
    <TaskSlot $width={49}><FirefoxIcon /></TaskSlot>
    <TaskSlot $width={49}><WordIcon /></TaskSlot>
    <TaskSlot $width={49} $running><CodeIcon /></TaskSlot>
    <TaskSlot $width={49} $running><PhotosIcon /></TaskSlot>
  </>
);

const ClockFace = () => (
  <Clock>
    <div>10:31 PM</div>
    <div>3/18/2020</div>
  </Clock>
);

const App = () => (
  <Desktop>
    <GlobalStyle />
    <Monitor $width={1920}>
      <BrowserChrome
        stripColor="#2e4c78"
        favicon={<Globe />}
        title="cycler"
        address={<UrlText $spacing={0}><Host>localhost</Host>:5000</UrlText>}
      />
      <Scheduler />
      <TaskBar>
        <TaskSlot $width={48}><WindowsIcon /></TaskSlot>
        <TaskSlot $width={48}><SearchIcon /></TaskSlot>
        <PinnedApps />
        <Tray $right={2}><ClockFace /></Tray>
      </TaskBar>
    </Monitor>
    <Monitor $width={1912}>
      <BrowserChrome
        stripColor="#6b7f9f"
        favicon={<GrafanaLogo size={16} />}
        title="Azure Sphere Thermostat - Grafana"
        fade
        dimButtons
        address={
          <>
            <UrlText $spacing={0}><Host>Not secure</Host></UrlText>
            <UrlDivider />
            <UrlText $spacing={0.03}>
              <Host>192.168.0.27</Host>
              :3000/d/zZTLpokgz/azure-sphere-thermostat?orgId=1&amp;from=1580540400000&amp;to=1580626799000
            </UrlText>
          </>
        }
      />
      <Dashboard />
      <TaskBar>
        <TaskSlot $width={48}><WindowsIcon /></TaskSlot>
        <SearchBox><SearchIcon />Type here to search</SearchBox>
        <PinnedApps />
        <Tray $right={0}>
          <TrayItem $width={66}>Documents</TrayItem>
          <TrayItem $width={18} $raise={22}>
            <svg width="8" height="6" viewBox="0 0 8 6" fill="none" stroke="#fff" strokeWidth="1.200"><path d="M.5.500L3 3 .5 5.500M4.500.500L7 3 4.500 5.500" /></svg>
          </TrayItem>
          <TrayItem $width={24}>
            <svg width="12" height="8" viewBox="0 0 12 8" fill="none" stroke="#fff" strokeWidth="1.500"><path d="M.5 7L6 1l5.500 6" /></svg>
          </TrayItem>
          <TrayItem $width={24}>
            <svg width="17" height="12" viewBox="0 0 17 12">
              <path d="M3.500 12A3.500 3.500 0 0 1 3 5a5 5 0 0 1 9-1.500A4.300 4.300 0 0 1 13 12z" fill="#0f6cc8" />
              <path d="M4 12a3 3 0 0 1 2-5l6-2a3.700 3.700 0 0 1 1 7z" fill="#29a5ee" />
            </svg>
          </TrayItem>
          <TrayItem $width={24}>
            <svg width="13" height="13" viewBox="0 0 13 13" fill="none" stroke="#fff" strokeWidth="1.100">
              <path d="M.6 13A12.400 12.400 0 0 1 13 .6M4 13A9 9 0 0 1 13 4M7.300 13A5.700 5.700 0 0 1 13 7.300" />
              <circle cx="11.500" cy="11.500" r="1.300" fill="#fff" stroke="none" />
            </svg>
          </TrayItem>
          <TrayItem $width={24}>
            <svg width="17" height="14" viewBox="0 0 17 14" fill="none" stroke="#fff" strokeWidth="1.100">
              <path d="M.6 4.500h2.500l4-3.700v12.400l-4-3.700H.6zM9.500 5q1.200 2 0 4" />
              <path d="M11.500 3q2.500 4 0 8M13.700 1.200q3.800 5.800 0 11.600" strokeOpacity="0.500" />
            </svg>
          </TrayItem>
          <TrayItem $width={3} />
          <ClockFace />
          <TrayItem $width={45}>
            <svg width="26" height="30" viewBox="0 0 26 30">
              <path d="M2 3h16v13H8l-4 4v-4H2z" fill="#fff" />
              <path d="M5 6.500h10M5 9.500h10M5 12.500h7" stroke="#1b2a40" strokeWidth="1.200" />
              <circle cx="17" cy="20" r="8" fill="#1f3355" stroke="#8c97a8" />
              <text x="17" y="24" textAnchor="middle" fontFamily="Open Sans, sans-serif" fontSize="11.500" fontWeight="600" fill="#fff">4</text>
            </svg>
          </TrayItem>
        </Tray>
      </TaskBar>
    </Monitor>
  </Desktop>
);

export default App;
